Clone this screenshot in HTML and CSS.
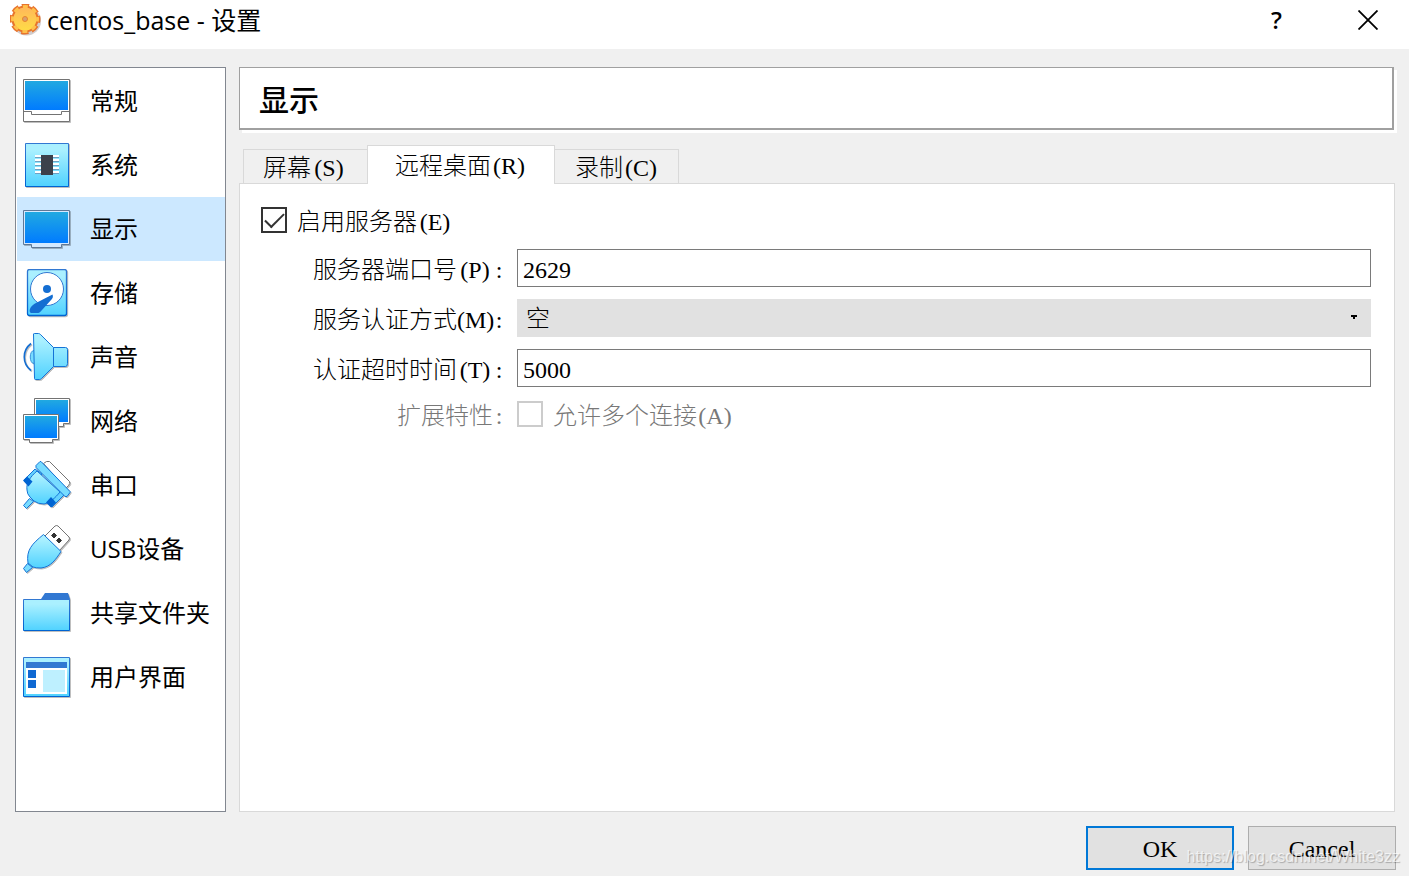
FILE: index.html
```html
<!DOCTYPE html>
<html lang="zh-CN">
<head>
  <meta charset="UTF-8">
  <title>centos_base - 设置</title>
  <link rel="stylesheet" href="styles.css">
</head>
<body>
  <header class="titlebar">
    <svg class="app-icon" viewBox="0 0 32 32">
      <defs>
        <linearGradient id="gear" x1="0" y1="0" x2="0" y2="1">
          <stop offset="0" stop-color="#ffb85a"/>
          <stop offset="1" stop-color="#ffdc46"/>
        </linearGradient>
      </defs>
      <circle cx="16.500" cy="17" r="14.500" fill="#d2cdcd"/>
      <circle cx="15" cy="15" r="13.500" fill="#e8742c"/>
      <circle cx="15" cy="15" r="13.500" fill="none" stroke="#e8742c" stroke-width="4" stroke-dasharray="7.200 3.403" stroke-dashoffset="3.600"/>
      <circle cx="15" cy="15" r="11.500" fill="url(#gear)"/>
      <circle cx="15" cy="15" r="12.500" fill="none" stroke="#ffc04c" stroke-width="3" stroke-dasharray="5 4.817" stroke-dashoffset="2.500"/>
      <circle cx="15" cy="15" r="2.500" fill="#d9a070" stroke="#e8842c"/>
    </svg>
    <h1>centos_base - 设置</h1>
    <button class="win-btn help" type="button" aria-label="帮助">?</button>
    <button class="win-btn close" type="button" aria-label="关闭">
      <svg width="20" height="20" viewBox="0 0 20 20"><path d="M.5.5l19 19M19.500.5l-19 19" stroke="#000" stroke-width="1.800"/></svg>
    </button>
  </header>

  <main class="content">
    <nav class="sidebar">
      <a href="#general">
        <svg viewBox="0 0 48 48">
          <defs>
            <linearGradient id="screen" x1="0" y1="0" x2="0" y2="1">
              <stop offset="0" stop-color="#21a9e1"/>
              <stop offset="1" stop-color="#007bff"/>
            </linearGradient>
            <linearGradient id="sky" x1="0" y1="0" x2="0" y2="1">
              <stop offset="0.15" stop-color="#aaf0ff"/>
              <stop offset="1" stop-color="#50d2ff"/>
            </linearGradient>
            <linearGradient id="edge" x1="0" y1="0" x2="0" y2="1">
              <stop offset="0" stop-color="#3278d2"/>
              <stop offset="1" stop-color="#0064d2"/>
            </linearGradient>
          </defs>
          <path d="M.5 2.500h46v42H.5z" fill="#fff" stroke="#737373"/>
          <path d="M2 4h43v29H2z" fill="url(#screen)"/>
          <path d="M.5 34.500h8v3h30v-3h8" fill="none" stroke="#737373"/>
        </svg>
        <span>常规</span>
      </a>
      <a href="#system">
        <svg viewBox="0 0 48 48">
          <path d="M2.500 2.500h43v43h-43z" fill="url(#sky)" stroke="url(#edge)"/>
          <path d="M12 15.500h24M12 19.500h24M12 23.500h24M12 27.500h24M12 31.500h24" stroke="#fff" stroke-width="3"/>
          <path d="M12 16.500h24M12 20.500h24M12 24.500h24M12 28.500h24M12 32.500h24" stroke="#6ea0c3"/>
          <path d="M18 14h12v20H18z" fill="#3c414b"/>
        </svg>
        <span>系统</span>
      </a>
      <a href="#display" class="selected">
        <svg viewBox="0 0 48 48">
          <path d="M.5 5.500h46v34h-8v3h-30v-3h-8z" fill="#d4e9ff" stroke="#5f7896"/>
          <path d="M2 7h43v31H2z" fill="url(#screen)"/>
        </svg>
        <span>显示</span>
      </a>
      <a href="#storage">
        <svg viewBox="0 0 48 48">
          <rect x="4.500" y=".5" width="39" height="46" rx="2" fill="url(#sky)" stroke="url(#edge)" stroke-width="1.300"/>
          <circle cx="24" cy="20" r="16.500" fill="#fff" stroke="#3278d2"/>
          <circle cx="24" cy="20" r="4" fill="#146ed2"/>
          <path d="M29.500 25.500c1 2 0 4-1 5L19 41c-2 2.500-3 3-5 3H8c-2-1-1.500-4 0-6 1.500-2 3-3 5-4z" fill="#146ed2"/>
        </svg>
        <span>存储</span>
      </a>
      <a href="#audio">
        <svg viewBox="0 0 48 48">
          <path d="M8 10.500c-9 7-9 20 0 27" fill="none" stroke="#146ed2" stroke-width="1.600"/>
          <path d="M11 17.500c-5 0-5 13 0 13" fill="#78dcff" stroke="#3c96dc"/>
          <path d="M10.500 1q0-.5 1-.5h4q1 0 2 1l13 13h12q2 0 2 2v14q0 3-2 3h-12l-12 12q-1 1-2 1h-4q-1 0-1-1zM30.500 14.500v19" fill="url(#sky)" stroke="#1473d7"/>
        </svg>
        <span>声音</span>
      </a>
      <a href="#network">
        <svg viewBox="0 0 48 48">
          <path d="M11.500 1.500h35v25h-6v3h-23v-3h-6z" fill="#fff" stroke="#737373"/>
          <path d="M13 3h32v22H13z" fill="url(#screen)"/>
          <path d="M.5 17.500h35v25h-6v3h-23v-3h-6z" fill="#fff" stroke="#737373"/>
          <path d="M2 19h32v22H2z" fill="url(#screen)"/>
        </svg>
        <span>网络</span>
      </a>
      <a href="#serial">
        <svg viewBox="0 0 48 48">
          <path d="M20.500 2.500l3-2h3l20 20q1 2-1 4l-3 3z" fill="#fff" stroke="#737373"/>
          <path d="M12 8L1 19l6 6 12-12zM37 28L24 41l5 5 12-12z" fill="#64d2ff" stroke="#1473d7"/>
          <path d="M14 10C7 16 3 22 4 29q0 4 3 7l4 4q4 3 10 3c6-1 11-6 16-12z" fill="url(#sky)" stroke="#1473d7"/>
          <path d="M4 15.500L0 19.500l5.500 6 4-5zM28 36l-5 5.500 5 5 5-5z" fill="#0064d2"/>
          <path d="M.5 44.500l6-7 4 3-7 7z" fill="#78dcff" stroke="#1473d7"/>
          <path d="M17 .5l-4 4v2l29 29h2l3-4v-1L18 .5z" fill="#78dcff" stroke="#1473d7"/>
        </svg>
        <span>串口</span>
      </a>
      <a href="#usb">
        <svg viewBox="0 0 48 48">
          <path d="M22 11L32 1q2-1 3 0l11 11q1 1 0 3L36 26z" fill="#fff" stroke="#737373"/>
          <path d="M31 8l2.500 2.500L31 13l-2.500-2.500zM36 13l2.500 2.500L36 18l-2.500-2.500z" fill="#323232" stroke="#323232"/>
          <path d="M20.500 9.500l17.500 17C33 34 28 42 18 43q-5 0-8-1l-5-4c-2-13 4-19 15.500-28.500z" fill="url(#sky)" stroke="#1473d7"/>
          <path d="M.5 43.500l4-5 5 4-6 5z" fill="#78dcff" stroke="#1473d7"/>
        </svg>
        <span>USB设备</span>
      </a>
      <a href="#folders">
        <svg viewBox="0 0 48 48">
          <path d="M18 10l4-6h23l2 6v2H18z" fill="#3278d2"/>
          <path d="M.5 10.500h46v31H.5z" fill="url(#sky)" stroke="url(#edge)"/>
        </svg>
        <span>共享文件夹</span>
      </a>
      <a href="#ui">
        <svg viewBox="0 0 48 48">
          <path d="M.5 4.500h46v39H.5z" fill="url(#sky)" stroke="url(#edge)"/>
          <path d="M3 9h41v32H3z" fill="#fff"/>
          <path d="M3 9h41v6H3z" fill="#3278d2"/>
          <path d="M5 17h8v8H5zM5 27h8v8H5z" fill="#0f69d2"/>
          <path d="M20 17h22v22H20z" fill="#bef0ff"/>
        </svg>
        <span>用户界面</span>
      </a>
    </nav>

    <section class="page">
      <h2>显示</h2>

      <div class="tabs" role="tablist">
        <button type="button" role="tab">屏幕<span class="key">(S)</span></button>
        <button type="button" role="tab" class="active" aria-selected="true">远程桌面<span class="key">(R)</span></button>
        <button type="button" role="tab">录制<span class="key">(C)</span></button>
      </div>

      <form class="panel" id="settings">
        <div class="check">
          <input type="checkbox" id="enable" checked>
          <label for="enable">启用服务器<span class="key">(E)</span></label>
        </div>

        <div class="fields">
          <label for="port">服务器端口号<span class="key">(P)</span><span class="colon">:</span></label>
          <input type="text" id="port" value="2629">

          <label for="method">服务认证方式<span class="key">(M)</span><span class="colon">:</span></label>
          <select id="method">
            <option>空</option>
          </select>

          <label for="timeout">认证超时时间<span class="key">(T)</span><span class="colon">:</span></label>
          <input type="text" id="timeout" value="5000">

          <span class="caption disabled">扩展特性<span class="colon">:</span></span>
          <div class="check disabled">
            <input type="checkbox" id="multiple" disabled>
            <label for="multiple">允许多个连接<span class="key">(A)</span></label>
          </div>
        </div>
      </form>
    </section>
  </main>

  <footer class="actions">
    <button type="submit" form="settings" class="default">OK</button>
    <button type="button">Cancel</button>
    <span class="watermark">https://blog.csdn.net/White3zz</span>
  </footer>
</body>
</html>
```
FILE: styles.css
```css
* {
  box-sizing: border-box;
}
body {
  margin: 0;
  min-height: 100vh;
  display: flex;
  flex-direction: column;
  background: #f0f0f0;
  color: #000;
  font-family: "Liberation Serif", "Noto Sans CJK SC", serif;
  font-size: 24px;
  font-weight: 300;
  line-height: 32px;
}
button, input, select {
  font: inherit;
  color: inherit;
  margin: 0;
}

/* Shortcut hints take the width of the half-width letters */
.key, .colon {
  display: inline-block;
  text-align: center;
  white-space: nowrap;
}
.key {
  width: 36px;
}
.colon {
  width: 12px;
}

/* Title bar */
.titlebar {
  display: flex;
  align-items: center;
  height: 49px;
  padding: 0 10px 9px;
  background: #fff;
  font-family: "Open Sans", "Noto Sans CJK SC", sans-serif;
  font-weight: 400;
}
.app-icon {
  width: 32px;
  height: 32px;
  margin-right: 5px;
}
.titlebar h1 {
  flex: 1;
  margin: 0;
  font-size: 25px;
  font-weight: 400;
}
.win-btn {
  display: flex;
  align-items: center;
  justify-content: center;
  height: 40px;
  padding: 0;
  border: none;
  background: none;
}
.help {
  width: 91px;
  font-weight: 600;
}
.close {
  width: 62px;
  margin-left: 15px;
}

.content {
  flex: 1;
  display: grid;
  grid-template-columns: 211px 1fr;
  gap: 13px;
  padding: 18px 12px 0 15px;
}

/* Category list */
.sidebar {
  padding: 1px 0 1px 1px;
  border: 1px solid #828790;
  background: #fff;
  font-family: "Open Sans", "Noto Sans CJK SC", sans-serif;
  font-weight: 400;
}
.sidebar a {
  display: flex;
  align-items: center;
  gap: 19px;
  height: 64px;
  padding-left: 6px;
  color: inherit;
  text-decoration: none;
  white-space: nowrap;
}
.sidebar a.selected {
  background: #cce8ff;
}
.sidebar svg {
  width: 48px;
  height: 48px;
  filter: drop-shadow(1px 1px 0 rgba(0, 0, 0, 0.25));
}

/* Settings page */
.page {
  display: flex;
  flex-direction: column;
}
.page h2 {
  margin: 0 3px 15px 0;
  padding: 17px 19px 11px;
  border: 1px solid #a0a0a0;
  border-width: 1px 2px 2px 1px;
  background: #fff;
  box-shadow: 3px 3px 0 #fff;
  font-size: 30px;
  font-weight: 500;
}
.tabs {
  display: flex;
  align-items: flex-end;
  padding-left: 4px;
}
.tabs button {
  height: 34px;
  padding: 3px 20px 0 19px;
  border: 1px solid #d9d9d9;
  border-width: 1px 1px 0;
  background: #f0f0f0;
  line-height: 30px;
}
.tabs button:first-child {
  border-right: none;
}
.tabs button:last-child {
  padding: 3px 19px 0 20px;
  border-left: none;
}
.tabs button.active {
  z-index: 1;
  height: 39px;
  margin-bottom: -1px;
  padding: 1px 27px 0;
  background: #fff;
}
.panel {
  flex: 1;
  margin-right: 2px;
  padding: 23px 23px 23px 21px;
  border: 1px solid #d9d9d9;
  background: #fff;
}
.check {
  display: flex;
  align-items: center;
  gap: 10px;
  height: 26px;
}
.check input {
  appearance: none;
  display: grid;
  place-items: center;
  width: 26px;
  height: 26px;
  border: 2px solid #333;
  background: #fff;
}
.check input:checked::before {
  content: "";
  width: 17px;
  height: 8px;
  margin-bottom: 5px;
  border: solid #333;
  border-width: 0 0 2px 2px;
  transform: rotate(-45deg);
}
.disabled {
  color: #787878;
}
.check.disabled input {
  border-color: #ccc;
}
.fields {
  display: grid;
  grid-template-columns: 244px 1fr;
  grid-template-rows: repeat(3, 38px) 30px;
  gap: 12px;
  align-items: center;
  margin-top: 16px;
}
.check label, .fields > label, .caption {
  padding-top: 3px;
}
.fields > label, .caption {
  text-align: right;
}
.fields > input, .fields > select {
  width: 100%;
  height: 38px;
  border: 1px solid #7a7a7a;
  border-radius: 0;
  background: #fff;
  padding: 4px 5px 0;
}
.fields > select {
  appearance: none;
  padding: 2px 9px 0;
  border: none;
  background-color: #e1e1e1;
  background-image: linear-gradient(#000, #000), linear-gradient(#000, #000);
  background-position: right 14px top 16px, right 16px top 18px;
  background-size: 6px 2px, 2px 2px;
  background-repeat: no-repeat;
}

/* Dialog buttons */
.actions {
  position: relative;
  display: flex;
  justify-content: flex-end;
  gap: 14px;
  padding: 14px 13px 6px;
}
.actions button {
  width: 148px;
  height: 44px;
  padding: 2px 0 0;
  border: 1px solid #adadad;
  background: #e1e1e1;
}
.actions button.default {
  border: 2px solid #0078d7;
}
.watermark {
  position: absolute;
  right: 9px;
  bottom: 3px;
  font-family: "Liberation Sans", sans-serif;
  font-size: 16px;
  color: rgba(255, 255, 255, 0.7);
  text-shadow: 1px 1px 1px rgba(0, 0, 0, 0.25);
  pointer-events: none;
}
```
